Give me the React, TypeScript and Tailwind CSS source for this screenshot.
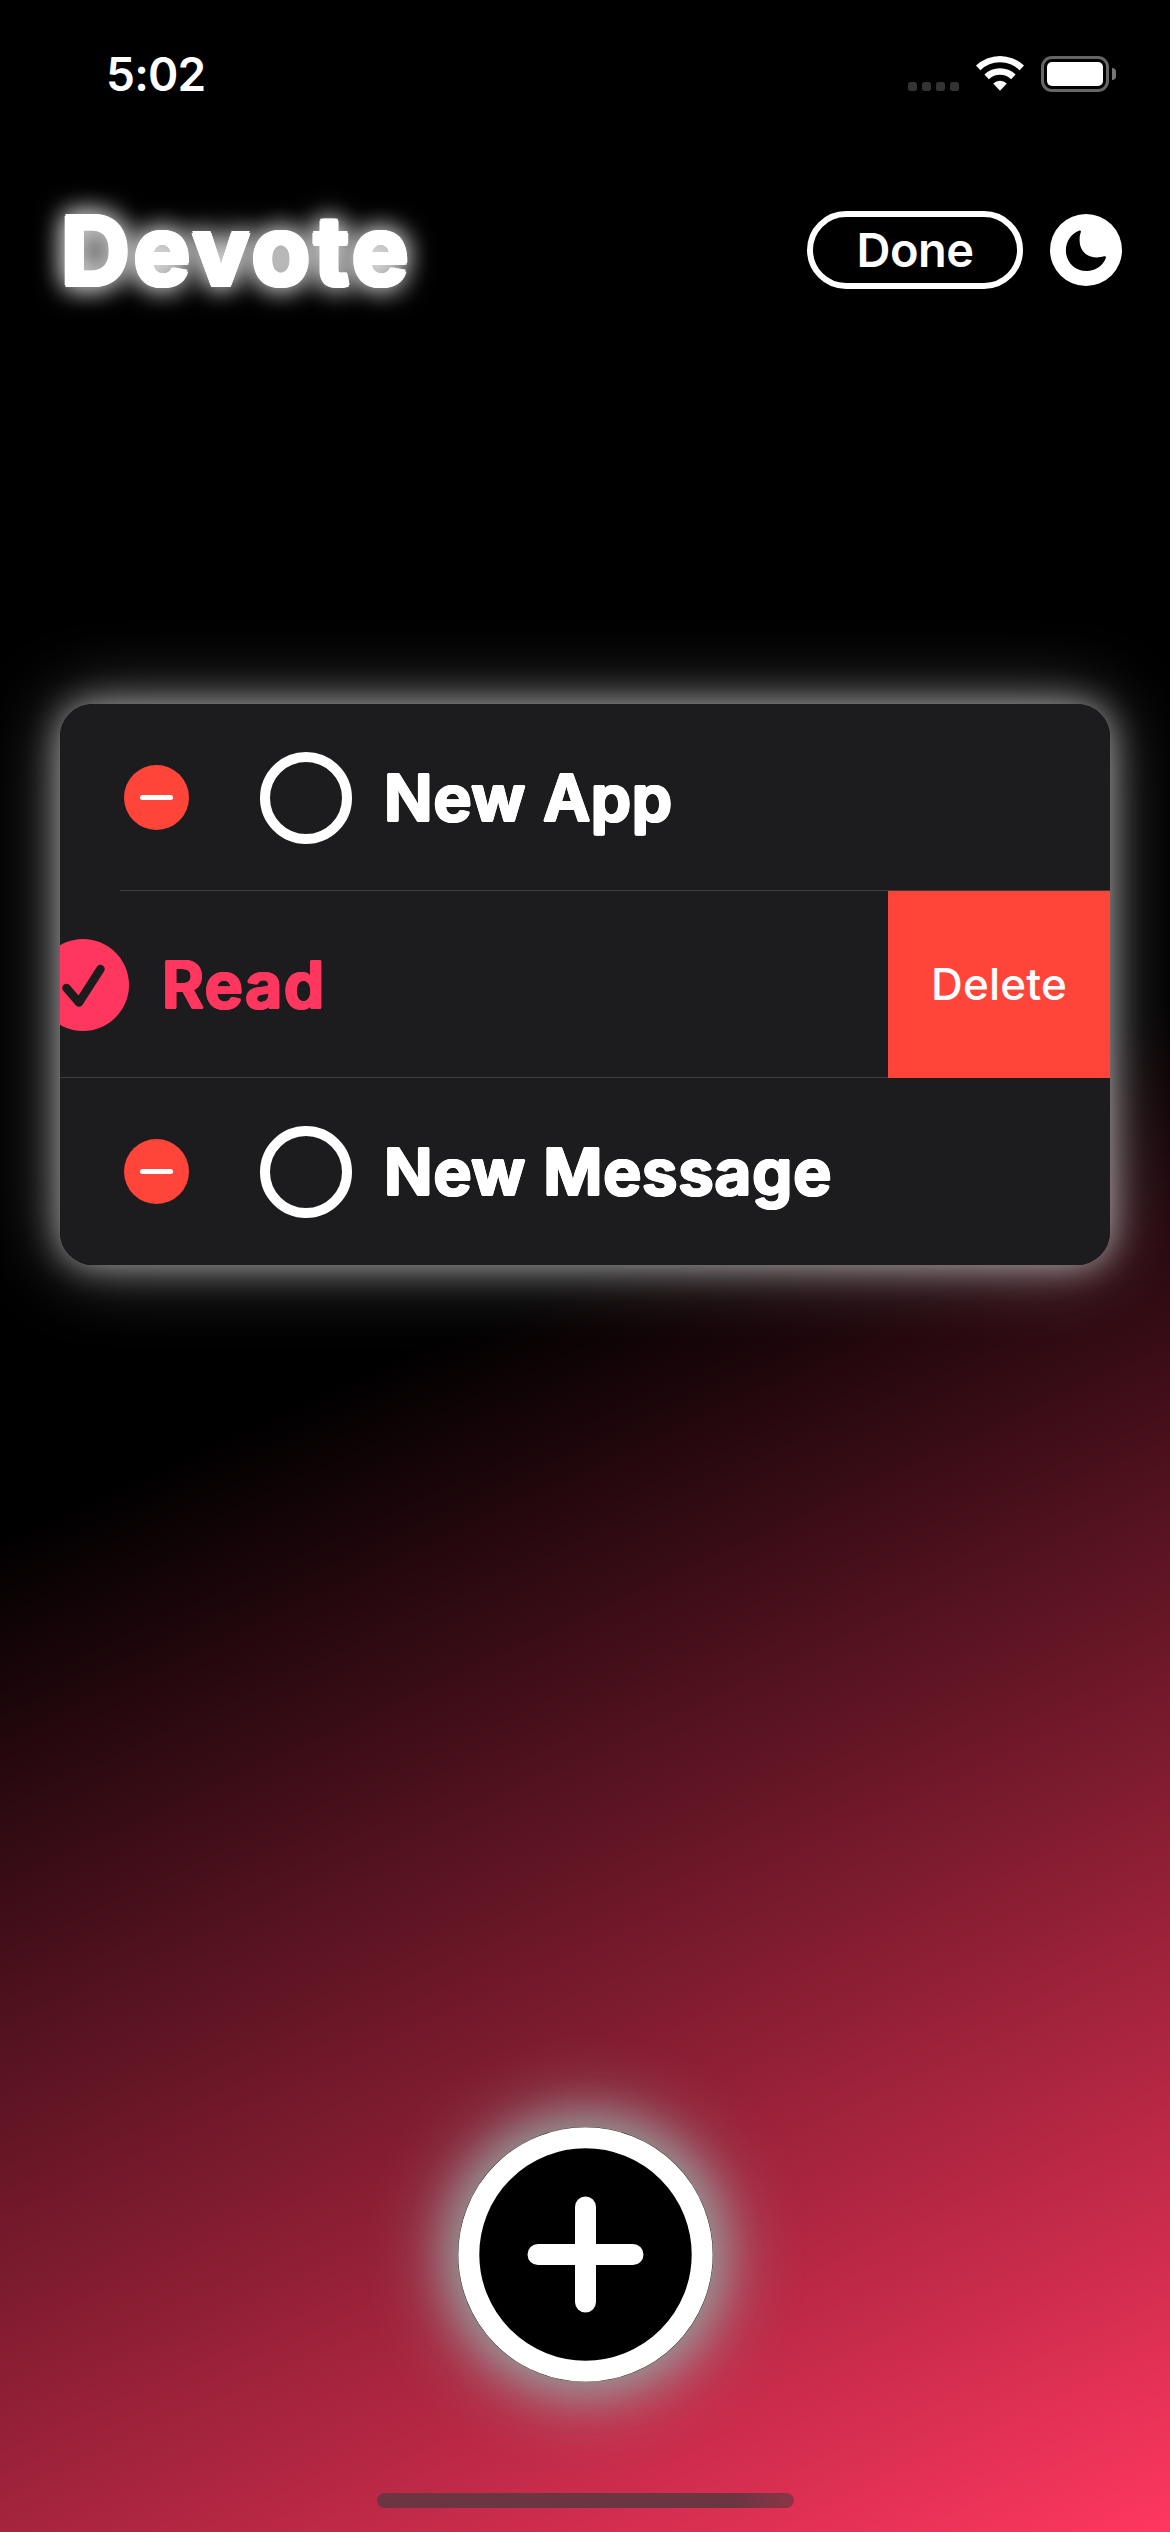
import React from "react";

const MinusBadge = () => (
  <div className="flex size-[65px] shrink-0 items-center justify-center rounded-full bg-[#ff453a]">
    <div className="h-[5px] w-[33px] rounded-full bg-white" />
  </div>
);

// The solid shadows thicken the letters and round off their corners.
const taskTitle =
  "text-[64px] leading-none font-semibold whitespace-nowrap [text-shadow:1.6px_0_currentColor,-1.6px_0_currentColor,0_1.4px_currentColor,0_-1.4px_currentColor,1.1px_1.1px_currentColor,-1.1px_1.1px_currentColor,1.1px_-1.1px_currentColor,-1.1px_-1.1px_currentColor]";

const TaskRow = ({ title }: { title: string }) => (
  <div className="flex h-[187px] items-center pl-16">
    <MinusBadge />
    <div className="ml-[71px] size-[92px] shrink-0 rounded-full border-[10px] border-white" />
    <span className={`ml-[32px] tracking-[1px] text-white ${taskTitle}`}>{title}</span>
  </div>
);

const StatusBar = () => (
  <div className="flex h-[148px] items-start justify-between pt-[55px] pr-[54px] pl-[106px]">
    <span className="-mt-px text-[46px] leading-[40px] font-semibold tracking-[-0.8px] text-white">5:02</span>
    <div className="flex items-start">
      <div className="mt-[27px] flex gap-[5px]">
        {[0, 1, 2, 3].map((i) => (
          <div key={i} className="size-[9px] rounded-[2.5px] bg-[#333]" />
        ))}
      </div>
      <svg className="ml-[17px] h-[36px] w-[48px]" viewBox="0 0 48 36" fill="white">
        <path d="M0 10.6 A34.5 34.5 0 0 1 48 10.6 L43.6 15.3 A28 28 0 0 0 4.4 15.3 Z" />
        <path d="M8.4 19.5 A22.5 22.5 0 0 1 39.6 19.5 L35.1 24.2 A16.3 16.3 0 0 0 12.9 24.2 Z" />
        <path d="M17.2 28.4 A10.3 10.3 0 0 1 30.8 28.4 L24 35.7 Z" />
      </svg>
      <div className="mt-px ml-[17px] flex h-[36px] w-[68px] rounded-[11px] border-[3px] border-[#666] p-[3px]">
        <div className="flex-1 rounded-[5px] bg-white" />
      </div>
      <div className="mt-[13px] ml-[3px] h-[12px] w-[4px] rounded-r-full bg-[#777]" />
    </div>
  </div>
);

export default function App() {
  return (
    <div className="flex h-[2532px] w-[1170px] flex-col overflow-hidden bg-[linear-gradient(155.2deg,#000_50%,#ff375f_100%)] font-['Inter',sans-serif]">
      <StatusBar />

      <header className="flex h-[204px] items-center justify-between pr-12 pl-[61px]">
        <h1 className="text-[95px] leading-none font-bold tracking-[4px] text-white [text-shadow:2.4px_0_#fff,-2.4px_0_#fff,0_2.4px_#fff,0_-2.4px_#fff,1.7px_1.7px_#fff,-1.7px_1.7px_#fff,1.7px_-1.7px_#fff,-1.7px_-1.7px_#fff,0_0_24px_#fff,0_0_30px_#fff]">
          Devote
        </h1>
        <div className="flex items-center gap-[27px]">
          <button className="flex h-[78px] w-[216px] items-center justify-center rounded-full border-[6px] border-white pb-0.5 text-[47px] leading-none font-semibold tracking-[-0.5px] text-white">
            Done
          </button>
          <svg className="size-[72px]" viewBox="0 0 72 72">
            <circle cx="36" cy="36" r="36" fill="white" />
            <path
              d="M29 16.8c1.200-.6 2.300.2 1.800 1.500-1 2.500-1.200 5-1.200 7.700 0 10.500 6.600 17.400 17.400 17.400 2.700 0 4.600-.3 6.900-1.100 1.500-.5 2.500.6 1.900 1.900C52.600 51.800 45.300 57 36.700 57 24.600 57 15.900 48.200 15.900 36.300 15.900 27.300 21.300 19.700 29 16.800Z"
              fill="black"
            />
          </svg>
        </div>
      </header>

      <main className="mx-[60px] mt-[352px] h-[561px] rounded-[33px] shadow-[0_0_76px_rgba(255,255,255,0.38),0_0_34px_rgba(255,255,255,0.54)]">
        <div className="h-full overflow-hidden rounded-[33px] bg-[#1c1c1e]">
          <TaskRow title="New App" />
          <div className="-mt-px ml-[60px] h-px bg-[#3d3d41]" />
          <div className="flex h-[187px] items-center justify-between">
            <div className="-ml-[23px] flex items-center">
              <svg className="size-[92px]" viewBox="0 0 92 92" fill="none">
                <circle cx="46" cy="46" r="46" fill="#ff375f" />
                <path d="M29.500 49 L42 63.500 L63.500 30" stroke="#1c1c1e" strokeWidth="8.500" strokeLinecap="round" strokeLinejoin="round" />
              </svg>
              <span className={`ml-[33px] tracking-[2px] text-[#ff375f] ${taskTitle}`}>Read</span>
            </div>
            <div className="flex h-full w-[222px] items-center justify-center bg-[#ff453a] pb-0.5 text-[44px] leading-none font-[450] tracking-[0.2px] text-white">
              Delete
            </div>
          </div>
          <div className="-mt-px h-px bg-[#3d3d41]" />
          <TaskRow title="New Message" />
        </div>
      </main>

      <button className="mx-auto mt-[862px] flex size-[255px] shrink-0 items-center justify-center rounded-full bg-black shadow-[0_0_76px_14px_rgba(150,165,162,0.85),0_0_40px_6px_rgba(150,165,162,0.7)]">
        <svg className="size-[255px]" viewBox="0 0 255 255" fill="none" stroke="white" strokeWidth="21" strokeLinecap="round">
          <circle cx="127.500" cy="127.500" r="116.700" />
          <path d="M80 127.500H175M127.500 80V175" />
        </svg>
      </button>

      <div className="mx-auto mt-[111px] h-[15px] w-[417px] rounded-full bg-[linear-gradient(90deg,#6b3541_85%,#8c3546)]" />
    </div>
  );
}
